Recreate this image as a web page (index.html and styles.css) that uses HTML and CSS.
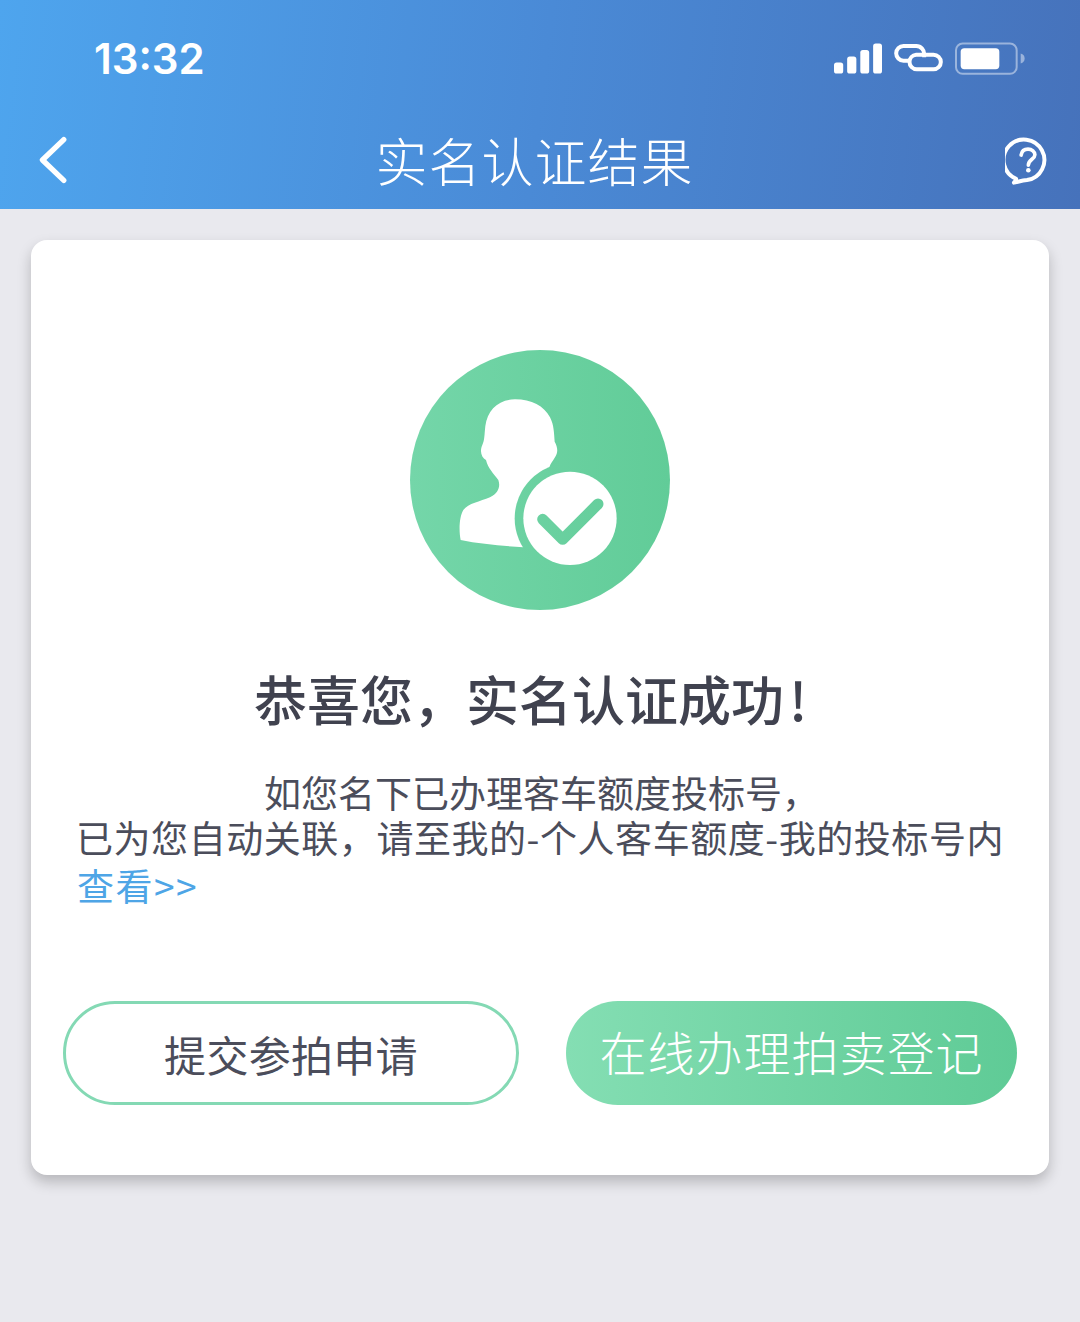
FILE: index.html
```html
<!DOCTYPE html>
<html>
<head>
    <meta charset="utf-8">
    <link rel="stylesheet" href="styles.css">
</head>
<body>
    <header class="header">
        <div class="status-bar">
            <span class="time">13:32</span>
            <div class="status-icons">
                <svg class="icon-signal" viewBox="98 70 146 92">
                    <rect x="98" y="128" width="28" height="34" rx="8" fill="#fff"/>
                    <rect x="138" y="110" width="28" height="52" rx="8" fill="#fff"/>
                    <rect x="178" y="90" width="27" height="72" rx="8" fill="#fff"/>
                    <rect x="217" y="70" width="27" height="92" rx="8" fill="#fff"/>
                </svg>
                <svg class="icon-link" viewBox="26 28 146 84" fill="none" stroke="#fff" stroke-width="12">
                    <path d="M74 78H54a22 22 0 0 1 0-44H92a24 24 0 0 1 24 26v8"/>
                    <path d="M92 60H144a21 21 0 0 1 0 44H94a22 22 0 0 1-22-22 22 22 0 0 1 20-22z"/>
                </svg>
                <svg class="icon-battery" viewBox="463 66 210 98">
                    <rect x="466" y="70" width="182" height="91" rx="20" fill="none" stroke="#fff" stroke-opacity="0.45" stroke-width="6"/>
                    <rect x="480" y="84" width="116" height="63" rx="11" fill="#fff"/>
                    <path d="M660 100c8 2 12 8 12 15s-4 13-12 15z" fill="#fff" fill-opacity="0.45"/>
                </svg>
            </div>
        </div>
        <nav class="nav">
            <svg class="icon-back" viewBox="0 0 36 54" fill="none" stroke="#fff" stroke-width="6" stroke-linecap="round" stroke-linejoin="round">
                <path d="M29 4L5 27l24 23"/>
            </svg>
            <h1 class="nav-title">实名认证结果</h1>
            <svg class="icon-help" viewBox="606 352 140 144" fill="none" stroke="#fff" stroke-width="12">
                <path d="M640 478a62 62 0 1 1 33 4c-14 1-26 5-40 8 4-4 7-7 7-12z" stroke-linejoin="round"/>
                <path d="M655 406c2-12 10-18 21-18 12 0 21 8 21 17 0 14-20 14-20 32" stroke-linecap="round" stroke-width="11"/>
                <circle cx="677" cy="452" r="7" fill="#fff" stroke="none"/>
            </svg>
        </nav>
    </header>

    <main class="content">
        <section class="card">
            <svg class="result-icon" viewBox="30 30 780 780">
                <defs>
                    <linearGradient id="iconFill" gradientUnits="userSpaceOnUse" x1="30" y1="0" x2="810" y2="0">
                        <stop offset="0" stop-color="#74d6a9"/>
                        <stop offset="1" stop-color="#61cc98"/>
                    </linearGradient>
                </defs>
                <circle cx="420" cy="420" r="390" fill="url(#iconFill)"/>
                <path d="M345 178C295 178 262 210 256 258C253 285 254 300 247 315C238 335 245 352 258 360C264 385 280 400 295 420C302 440 295 460 270 472C240 485 205 490 190 510C178 530 176 570 182 600C240 612 310 618 370 622L480 500L448 382C452 370 458 365 465 352C476 335 472 320 464 305C462 280 462 255 450 232C432 198 395 178 345 178Z" fill="#fff"/>
                <circle cx="510" cy="535" r="166" fill="url(#iconFill)"/>
                <circle cx="510" cy="535" r="140" fill="#fff"/>
                <path d="M428 538l60 60 106-106" fill="none" stroke="url(#iconFill)" stroke-width="33" stroke-linecap="round" stroke-linejoin="round"/>
            </svg>
            <h2 class="result-title">恭喜您，实名认证成功<span class="mark">!</span></h2>
            <div class="result-text">
                <p class="line line-first">如您名下已办理客车额度投标号，</p>
                <p class="line line-second">已为您自动关联，请至我的-个人客车额度-我的投标号内</p>
                <a class="view-link">查看&gt;&gt;</a>
            </div>
            <div class="actions">
                <button class="btn btn-outline">提交参拍申请</button>
                <button class="btn btn-fill">在线办理拍卖登记</button>
            </div>
        </section>
    </main>
</body>
</html>
```

FILE: styles.css
```css
body {
    font-family: "Noto Sans CJK SC", "Noto Sans", sans-serif;
    margin: 0;
    padding: 0;
    width: 1080px;
    height: 1322px;
    overflow: hidden;
    background-color: #e9e9ee;
}
.header {
    height: 209px;
    background: linear-gradient(97deg, #4ea5ee 0%, #4a8ad6 50%, #4672bb 100%);
    color: #fff;
}
.status-bar {
    height: 110px;
    padding: 6px 55px 0 94px;
    display: flex;
    justify-content: space-between;
    align-items: center;
    box-sizing: border-box;
}
.time {
    font-family: Inter, Roboto, sans-serif;
    font-size: 42px;
    font-weight: 600;
}
.status-icons {
    display: flex;
    align-items: center;
    gap: 12px;
}
.icon-signal {
    width: 48px;
    height: 31px;
}
.icon-link {
    width: 49px;
    height: 28px;
}
.icon-battery {
    width: 70px;
    height: 33px;
}
.nav {
    height: 99px;
    padding: 0 31px 0 38px;
    display: flex;
    align-items: center;
    justify-content: space-between;
}
.icon-back {
    width: 32px;
    height: 50px;
}
.nav-title {
    margin: 0 0 0 -6px;
    font-size: 52px;
    font-weight: 300;
    letter-spacing: 1px;
}
.icon-help {
    width: 46px;
    height: 48px;
    margin: 2px -2px 0 0;
}
.content {
    padding: 31px 31px 0;
}
.card {
    height: 935px;
    box-sizing: border-box;
    padding: 110px 32px 0;
    background-color: #fff;
    border-radius: 16px;
    box-shadow: 0px 7px 14px rgba(0,0,0,0.22);
    display: flex;
    flex-direction: column;
    align-items: center;
}
.result-icon {
    width: 260px;
    height: 260px;
    flex: none;
}
.result-title {
    margin: 48px 0 0;
    padding-right: 19px;
    font-size: 53px;
    font-weight: 500;
    line-height: 80px;
    color: #40424f;
}
.mark {
    margin-left: 5px;
}
.result-text {
    width: 100%;
    margin-top: 31px;
    text-align: center;
    font-size: 37px;
    line-height: 46px;
    font-weight: 400;
    color: #4b4d5b;
}
.line {
    margin: 0;
    white-space: nowrap;
}
.line-first {
    padding-left: 3px;
}
.line-second {
    margin-top: -1px;
    letter-spacing: 0.55px;
}
.view-link {
    display: block;
    margin: 2px 0 0 14px;
    text-align: left;
    letter-spacing: 1.5px;
    color: #4ea5e6;
}
.actions {
    width: 100%;
    margin-top: 93px;
    display: flex;
    justify-content: space-between;
}
.btn {
    height: 104px;
    border-radius: 52px;
    font-family: inherit;
    box-sizing: border-box;
    cursor: pointer;
}
.btn-outline {
    width: 456px;
    border: 3px solid #84d9b4;
    background-color: #fff;
    color: #4b4d5b;
    font-size: 42px;
    letter-spacing: 0.3px;
    font-weight: 400;
}
.btn-fill {
    width: 451px;
    padding-bottom: 6px;
    border: none;
    background: linear-gradient(90deg, #84deb3, #5fcb96);
    color: #fff;
    font-size: 47px;
    letter-spacing: 1px;
    font-weight: 300;
}
```
